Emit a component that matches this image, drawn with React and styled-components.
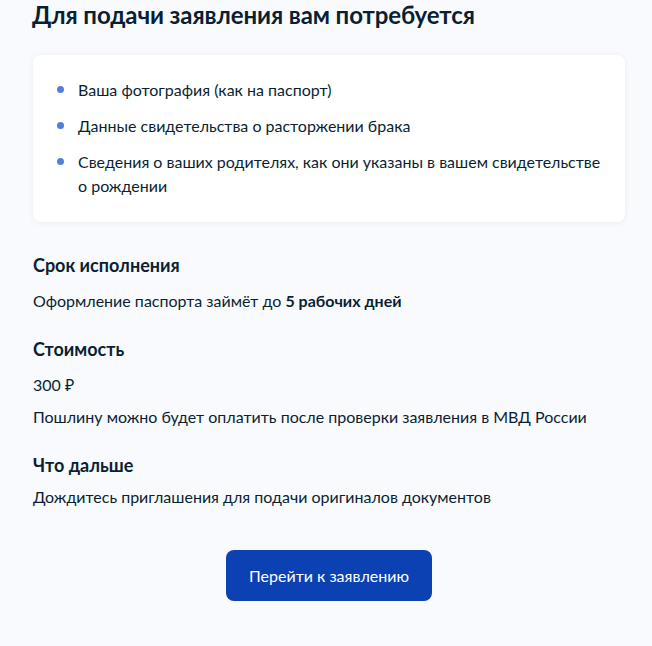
import React from 'react'
import styled, { createGlobalStyle } from 'styled-components'

const Global = createGlobalStyle`
body{
  margin:0;
  background:#f8fafd;
  font-family:Lato, "Noto Sans", sans-serif;
  color:#0b1f33;
}
`

const Page = styled.div`
padding:0 27px 40px 33px;
display:flex;
flex-direction:column;
`

const Title = styled.h1`
margin:0 0 25px -1px;
font-size:24px;
line-height:30px;
font-weight:700;
letter-spacing:-0.1px;
`

const Card = styled.div`
background:#fff;
border-radius:8px;
box-shadow:0 1px 6px rgba(11,31,51,0.06);
padding:23px 24px 24px 24px;
display:flex;
flex-direction:column;
gap:12px;
`

const Item = styled.div`
display:flex;
align-items:flex-start;
gap:14px;
font-size:16px;
line-height:24px;
`

const Dot = styled.span`
flex:none;
width:7px;
height:7px;
border-radius:50%;
background:#4e80dc;
margin-top:8px;
`

const Heading = styled.h2`
margin:${p => p.$first ? '31px' : '24px'} 0 ${p => p.$close ? '8px' : '12px'};
font-size:18px;
line-height:24px;
font-weight:700;
`

const Text = styled.p`
margin:0 0 ${p => p.$tight ? '8px' : '0'};
font-size:16px;
line-height:24px;
b{font-weight:700;}
`

const Button = styled.button`
align-self:center;
margin-top:41px;
width:206px;
height:51px;
border:none;
border-radius:8px;
background:#0c41b4;
color:#fff;
font-family:inherit;
font-size:16px;
cursor:pointer;
`

const items = [
  'Ваша фотография (как на паспорт)',
  'Данные свидетельства о расторжении брака',
  'Сведения о ваших родителях, как они указаны в вашем свидетельстве о рождении',
]

const App = () => {
  return (
    <Page>
      <Global/>
      <Title>Для подачи заявления вам потребуется</Title>
      <Card>
        {items.map(t => (
          <Item key={t}><Dot/><span>{t}</span></Item>
        ))}
      </Card>
      <Heading $first>Срок исполнения</Heading>
      <Text>Оформление паспорта займёт до <b>5 рабочих дней</b></Text>
      <Heading>Стоимость</Heading>
      <Text $tight>300 ₽</Text>
      <Text>Пошлину можно будет оплатить после проверки заявления в МВД России</Text>
      <Heading $close>Что дальше</Heading>
      <Text>Дождитесь приглашения для подачи оригиналов документов</Text>
      <Button>Перейти к заявлению</Button>
    </Page>
  )
}

export default App
